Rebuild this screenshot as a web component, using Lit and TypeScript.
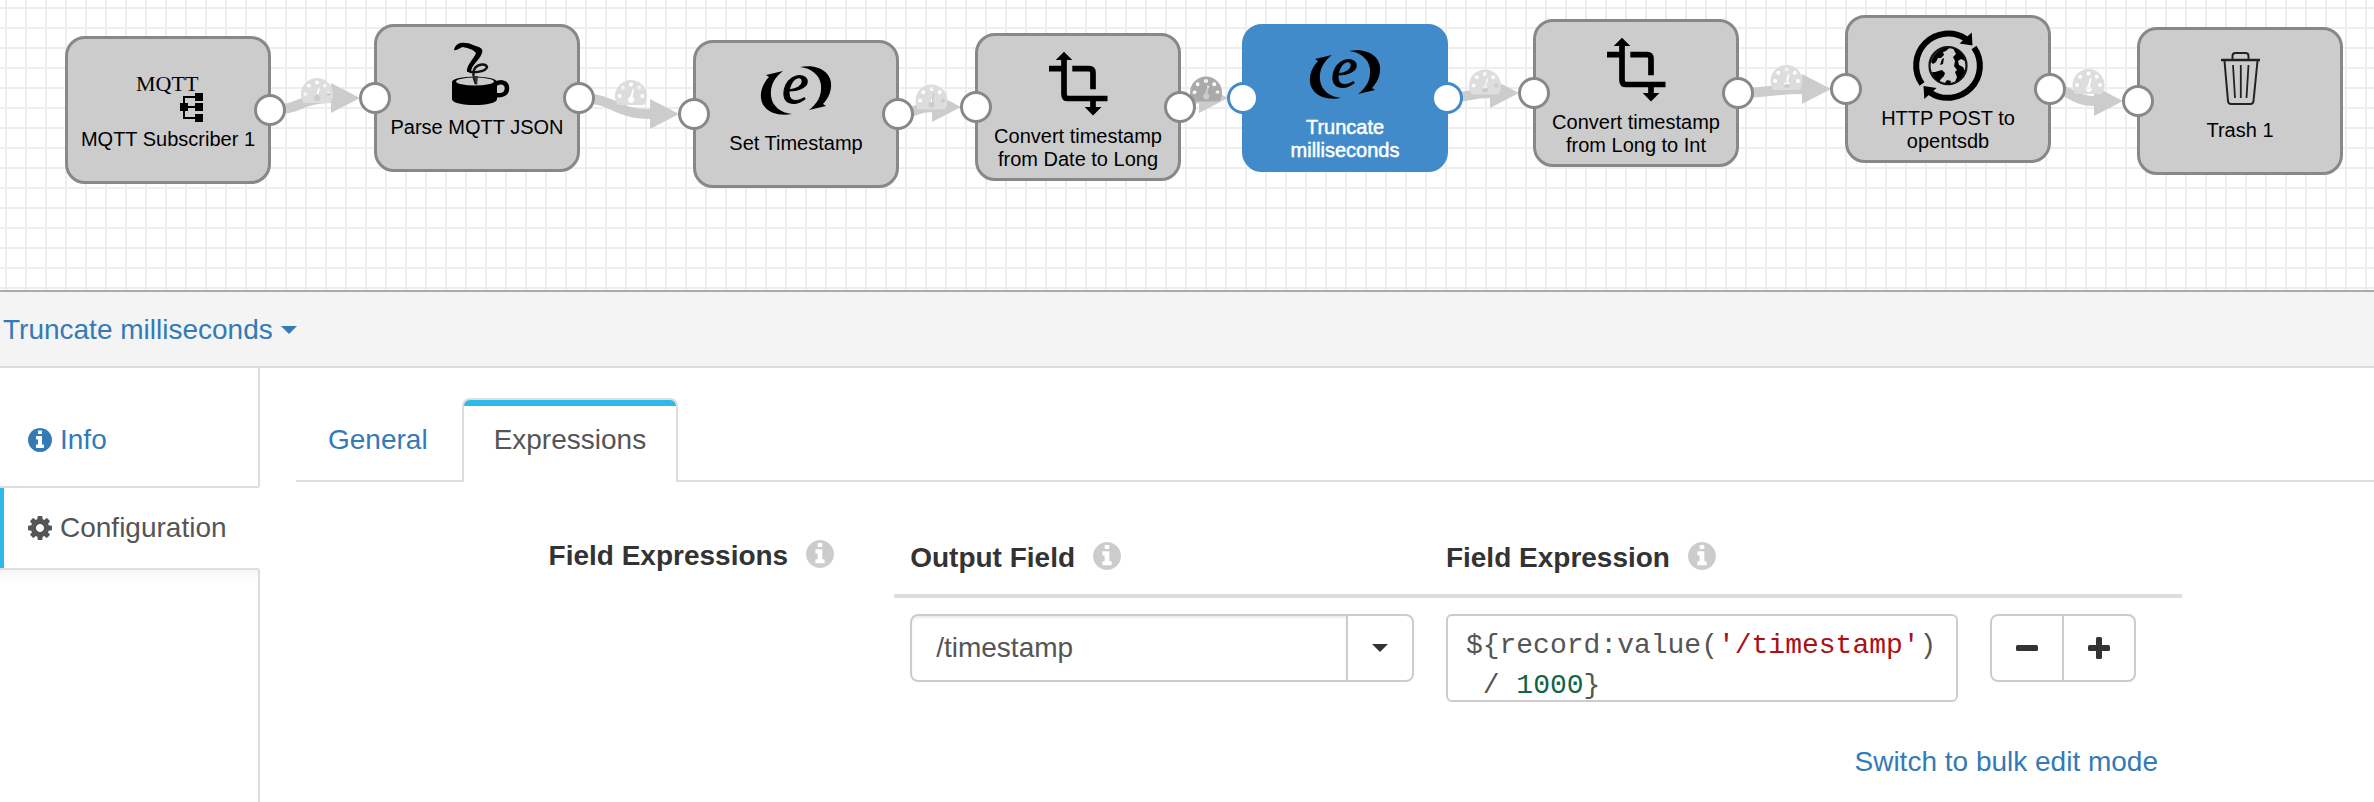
import { LitElement, html, svg, css } from "lit";
import { customElement, property, state } from "lit/decorators.js";
import { classMap } from "lit/directives/class-map.js";
import { styleMap } from "lit/directives/style-map.js";

interface Stage {
  id: string;
  lines: string[];
  icon: string;
  x: number;
  y: number;
  input: boolean;
  output: boolean;
}

const NODE_W = 206;
const NODE_H = 148;

const STAGES: Stage[] = [
  { id: "mqtt", lines: ["MQTT Subscriber 1"], icon: "mqtt", x: 65, y: 36, input: false, output: true },
  { id: "json", lines: ["Parse MQTT JSON"], icon: "cup", x: 374, y: 24, input: true, output: true },
  { id: "set", lines: ["Set Timestamp"], icon: "expr", x: 693, y: 40, input: true, output: true },
  { id: "date", lines: ["Convert timestamp", "from Date to Long"], icon: "convert", x: 975, y: 33, input: true, output: true },
  { id: "trunc", lines: ["Truncate", "milliseconds"], icon: "expr", x: 1242, y: 24, input: true, output: true },
  { id: "int", lines: ["Convert timestamp", "from Long to Int"], icon: "convert", x: 1533, y: 19, input: true, output: true },
  { id: "http", lines: ["HTTP POST to", "opentsdb"], icon: "http", x: 1845, y: 15, input: true, output: true },
  { id: "trash", lines: ["Trash 1"], icon: "trash", x: 2137, y: 27, input: true, output: false },
];

const expressionParen =
  "M27 23L10 27L13 29C5 37 2 50 8 58C14 66 25 68 36 66C25 65 16 58 15 48C14 37 19 29 27 23Z";

const stageIcons: Record<string, unknown> = {
  mqtt: svg`
    <text x="8" y="47" font-family="Liberation Serif, serif" font-size="22">MQTT</text>
    <path d="M71 53H56V74H71M56 63H71" fill="none" stroke="#000" stroke-width="2"/>
    <path d="M52 59h8v8h-8zM67 49h8v8h-8zM67 59h8v8h-8zM67 70h8v8h-8z"/>`,
  cup: svg`
    <path d="M15 50C15 43 60 43 60 50V67C60 75 15 75 15 67Z"/>
    <ellipse cx="38" cy="49.500" rx="19" ry="4" fill="#ccc"/>
    <path d="M59 52C63 49 70 50 70 56C70 62 65 64 59 63" fill="none" stroke="#000" stroke-width="4.500"/>
    <path d="M31 38C33 42 49 40 50 35C49 31 41 32 38 36C35 40 36 45 39 52" fill="none" stroke="#111" stroke-width="2.500"/>
    <path d="M17 18C19 9 29 10 36 13C42 15 47 16 45 21C43 28 34 33 34 40L30 40C29 33 37 27 39 21C36 17 30 16 26 15C22 16 20 19 17 18Z"/>
    <path d="M36 44L41 44L40 54Z" fill="#333"/>`,
  expr: svg`
    <path d=${expressionParen}/>
    <path d=${expressionParen} transform="rotate(180 40 42.500)"/>
    <text x="26" y="55" font-family="Liberation Serif, serif" font-style="italic" font-size="60" stroke="#000" stroke-width="1">e</text>`,
  convert: svg`
    <path d="M26 18V53Q26 57.500 30 57.500H69.500M11 27.700H24M34.300 27.700H51Q55 27.700 55 32V48.300M55 58V67" fill="none" stroke="#000" stroke-width="5.700"/>
    <path d="M26 10.700L34.300 19H17.700ZM46.700 66H63.500L55 74.500Z"/>`,
  http: svg`
    <g>
      <path d="M14 61A32 32 0 0 1 58 16" fill="none" stroke="#000" stroke-width="6"/>
      <path d="M63.700 9.500L64.500 22.500L51.500 20.500Z"/>
    </g>
    <g transform="rotate(180 40 42.700)">
      <path d="M14 61A32 32 0 0 1 58 16" fill="none" stroke="#000" stroke-width="6"/>
      <path d="M63.700 9.500L64.500 22.500L51.500 20.500Z"/>
    </g>
    <circle cx="40" cy="42.700" r="18.500" fill="none" stroke="#111" stroke-width="2.200"/>
    <path d="M23 39C25 32 30 27 36 25L41 25L38 28L35 29L36 32L33 35L30 35L28 39L25 41ZM27 49L34 47L37 50L36 53L33 56L31 59C27 56 25 53 24 49ZM45 25C51 27 56 32 57 38L53 36L50 38L51 42L55 44L57 48C55 53 52 57 47 59L49 54L47 49L49 47L46 43L47 38L45 34L48 31ZM34 36L36 35L35 41L32 42ZM39 57L43 58L42 61L37 60Z"/>`,
  trash: svg`
    <g fill="none" stroke="#222">
      <path d="M21 25H60" stroke-width="2.500"/>
      <path d="M32.500 25V21Q32.500 18 35.500 18H45.500Q48.500 18 48.500 21V25" stroke-width="2"/>
      <path d="M24.500 26L28 66Q28.300 69 31 69H50.500Q53.200 69 53.500 66L57.500 26" stroke-width="2"/>
      <path d="M33 30L35 63M40.800 30V63M48.500 30L46.500 63" stroke-width="1.800"/>
    </g>`,
};

const gaugePath =
  "M16 0A16 16 0 0 1 32 16C32 19.500 31 22.500 29.300 25H2.700C1 22.500 0 19.500 0 16A16 16 0 0 1 16 0Z" +
  "M16 2.500A2 2 0 1 0 16 6.500A2 2 0 1 0 16 2.500Z" +
  "M7.800 5.800A2 2 0 1 0 7.800 9.800A2 2 0 1 0 7.800 5.800Z" +
  "M24.200 5.800A2 2 0 1 0 24.200 9.800A2 2 0 1 0 24.200 5.800Z" +
  "M4.600 14A2 2 0 1 0 4.600 18A2 2 0 1 0 4.600 14Z" +
  "M27.400 14A2 2 0 1 0 27.400 18A2 2 0 1 0 27.400 14Z" +
  "M17.500 9L19 9.400L17.500 17A3.200 3.200 0 1 1 15.400 16.800Z";

const infoPath =
  "M1024 1248v-160q0-14-9-23t-23-9h-96V544q0-14-9-23t-23-9H544q-14 0-23 9t-9 23v160q0 14 9 23t23 9h96v320h-96q-14 0-23 9t-9 23v160q0 14 9 23t23 9h448q14 0 23-9t9-23zM896 352V192q0-14-9-23t-23-9H672q-14 0-23 9t-9 23v160q0 14 9 23t23 9h192q14 0 23-9t9-23zm640 416q0 209-103 385.500T1153.500 1433 768 1536t-385.500-103T103 1153.500 0 768t103-385.500T382.500 103 768 0t385.500 103T1433 382.500 1536 768z";

const cogPath =
  "M1024 768q0 106-75 181t-181 75-181-75-75-181 75-181 181-75 181 75 75 181zm512-109v222q0 12-8 23t-20 13l-185 28q-19 54-39 91 35 50 107 138 10 12 10 25t-9 23q-27 37-99 108t-94 71q-12 0-26-9l-138-108q-44 23-91 38-16 136-29 186-7 28-36 28H657q-14 0-24.500-8.500T621 1506l-28-184q-49-16-90-37l-141 107q-10 9-25 9-14 0-25-11-126-114-165-168-7-10-7-23 0-12 8-23 15-21 51-66.500t54-70.500q-27-50-41-99L29 913q-13-2-21-12.500T0 877V655q0-12 8-23t19-13l186-28q14-46 39-92-40-57-107-138-10-12-10-24 0-10 9-23 26-36 98.500-107.500T337 135q13 0 26 10l138 107q44-23 91-38 16-136 29-186 7-28 36-28h222q14 0 24.500 8.500T915 30l28 184q49 16 90 37l142-107q9-9 24-9 13 0 25 10 129 119 165 170 7 8 7 22 0 12-8 23-15 21-51 66.500t-54 70.500q26 50 41 98l183 28q13 2 21 12.500t8 23.500z";

/* ---------- Pipeline canvas ---------- */

@customElement("pipeline-canvas")
class PipelineCanvas extends LitElement {
  @property() selected = "trunc";

  static styles = css`
    :host {
      display: block;
      position: relative;
      height: 290px;
      overflow: hidden;
      background-color: #fff;
      background-image: linear-gradient(to right, #eee 2px, transparent 2px),
        linear-gradient(to bottom, #eee 2px, transparent 2px);
      background-size: 20px 20px;
      background-position: 5px 7px;
      font-family: "Liberation Sans", Arial, sans-serif;
    }
    .wires {
      position: absolute;
      left: 0;
      top: 0;
      width: 100%;
      height: 100%;
      overflow: visible;
    }
    .node {
      position: absolute;
      box-sizing: border-box;
      width: 206px;
      height: 148px;
      padding: 5px 0 0;
      border: 3px solid #888;
      border-radius: 20px;
      background: #ccc;
      color: #000;
      font: inherit;
      display: flex;
      flex-direction: column;
      align-items: center;
    }
    .node.selected {
      background: #428bca;
      border-color: #428bca;
      color: #fff;
    }
    .node-icon {
      width: 80px;
      height: 80px;
      flex: none;
    }
    .label {
      margin-top: 4px;
      font-size: 20px;
      line-height: 23px;
      text-align: center;
      white-space: nowrap;
    }
    .selected .label {
      -webkit-text-stroke: 0.5px #fff;
    }
    .line {
      display: block;
    }
    .port {
      position: absolute;
      box-sizing: border-box;
      top: 55px;
      width: 32px;
      height: 32px;
      border: 3px solid #888;
      border-radius: 50%;
      background: #fff;
    }
    .selected .port {
      border-color: #428bca;
    }
    .port.in {
      left: -18px;
    }
    .port.out {
      right: -18px;
    }
  `;

  private wire(from: Stage, to: Stage, i: number) {
    const x1 = from.x + NODE_W - 1;
    const y1 = from.y + NODE_H / 2;
    const x2 = to.x - 43;
    const y2 = to.y + NODE_H / 2;
    const bend = (x2 - x1) / 2;
    const gx = (x1 + to.x) / 2 - 21;
    const gy = (y1 + y2) / 2 - 26;
    return svg`
      <path d="M${x1} ${y1}C${x1 + bend} ${y1} ${x2 - bend} ${y2} ${x2} ${y2}" fill="none" stroke="#ccc" stroke-width="10"/>
      <path d="M${x2} ${y2 - 15}L${x2 + 29} ${y2}L${x2} ${y2 + 15}Z" fill="#ccc"/>
      <path d=${gaugePath} transform="translate(${gx} ${gy})" fill=${i === 3 ? "#aaa" : "#ddd"} fill-rule="evenodd"/>`;
  }

  render() {
    return html`
      <svg class="wires" aria-hidden="true">
        ${STAGES.slice(1).map((s, i) => this.wire(STAGES[i], s, i))}
      </svg>
      ${STAGES.map(
        (s) => html`
          <button
            class=${classMap({ node: true, selected: s.id === this.selected })}
            style=${styleMap({ left: `${s.x}px`, top: `${s.y}px` })}
            @click=${() => (this.selected = s.id)}
          >
            <svg class="node-icon" viewBox="0 0 80 80" aria-hidden="true">${stageIcons[s.icon]}</svg>
            <span class="label">${s.lines.map((l) => html`<span class="line">${l}</span>`)}</span>
            ${s.input ? html`<span class="port in"></span>` : ""}
            ${s.output ? html`<span class="port out"></span>` : ""}
          </button>
        `
      )}
    `;
  }
}

/* ---------- Application ---------- */

@customElement("app-root")
class AppRoot extends LitElement {
  @state() private field = "/timestamp";

  static styles = css`
    :host {
      display: flex;
      flex-direction: column;
      min-height: 100vh;
      background: #fff;
      color: #333;
      font-family: "Liberation Sans", Arial, sans-serif;
      font-size: 28px;
      line-height: 40px;
    }
    a {
      color: #337ab7;
      text-decoration: none;
    }
    button {
      font: inherit;
      cursor: pointer;
    }
    .titlebar {
      border-top: 2px solid #aaa;
      border-bottom: 2px solid #ddd;
      background: #f4f4f4;
      padding: 18px 3px 16px;
      display: flex;
    }
    .title {
      display: flex;
      align-items: center;
      gap: 8px;
      padding: 0;
      border: 0;
      background: none;
      color: #337ab7;
    }
    .caret {
      width: 16px;
      height: 8px;
      fill: currentColor;
    }
    .body {
      flex: 1;
      display: flex;
    }
    .side {
      width: 260px;
      flex: none;
      display: flex;
      flex-direction: column;
    }
    .side-link {
      box-sizing: border-box;
      display: flex;
      align-items: center;
      gap: 8px;
      padding: 20px 28px;
    }
    .side-link.first {
      padding: 52px 28px 26px;
      border-right: 2px solid #ddd;
      border-bottom: 2px solid #ddd;
      border-bottom-right-radius: 3px;
    }
    .side-link.active {
      color: #555;
      padding-left: 24px;
      border-left: 4px solid #2fb8ea;
    }
    .side-rest {
      flex: 1;
      border-top: 2px solid #ddd;
      border-right: 2px solid #ddd;
      border-top-right-radius: 3px;
      background: linear-gradient(#f6f6f6, #fff 12px);
    }
    .side-icon {
      width: 24px;
      height: 24px;
      fill: currentColor;
      fill-rule: evenodd;
    }
    .main {
      flex: 1;
      min-width: 0;
      padding: 30px 0 0 36px;
    }
    .tabs {
      display: flex;
      gap: 2px;
      border-bottom: 2px solid #ddd;
    }
    .tab {
      padding: 22px 32px 20px;
    }
    .tab.active {
      margin-bottom: -2px;
      padding: 20px 30px 22px;
      border: 2px solid #ddd;
      border-bottom: 0;
      border-radius: 8px 8px 0 0;
      background: linear-gradient(#2fb8ea 6px, #fff 6px);
      color: #555;
    }
    .tab-text {
      display: block;
    }
    .form {
      display: grid;
      grid-template-columns: 28fr 67fr;
      column-gap: 60px;
      padding: 40px 192px 0 0;
    }
    .form-label {
      display: flex;
      justify-content: flex-end;
      align-items: flex-start;
      padding-top: 14px;
    }
    .heading {
      display: flex;
      align-items: center;
      gap: 18px;
      font-weight: bold;
      white-space: nowrap;
    }
    .hint {
      width: 28px;
      height: 28px;
      margin-bottom: 4px;
      fill: #ccc;
    }
    .grid {
      width: 100%;
      table-layout: fixed;
      border-collapse: collapse;
    }
    .col-field {
      width: 41.6%;
    }
    .col-actions {
      width: 208px;
    }
    .grid th {
      padding: 16px;
      border-bottom: 4px solid #ddd;
      text-align: left;
    }
    .grid td {
      padding: 16px;
      vertical-align: top;
    }
    .combo {
      display: flex;
      height: 68px;
    }
    .input {
      flex: 1;
      min-width: 0;
      box-sizing: border-box;
      margin: 0;
      padding: 0 24px;
      border: 2px solid #ccc;
      border-radius: 8px 0 0 8px;
      box-shadow: inset 0 2px 2px rgba(0, 0, 0, 0.075);
      background: #fff;
      color: #555;
      font: inherit;
    }
    .drop {
      box-sizing: border-box;
      width: 66px;
      padding: 0;
      border: 2px solid #ccc;
      border-left: 0;
      border-radius: 0 8px 8px 0;
      background: #fff;
      color: #333;
      display: flex;
      align-items: center;
      justify-content: center;
    }
    .code {
      box-sizing: border-box;
      height: 88px;
      padding: 10px 18px;
      border: 2px solid #ccc;
      border-radius: 6px;
      overflow: hidden;
      color: #555;
      font-family: "Liberation Mono", "Courier New", monospace;
      white-space: pre;
    }
    .code-line {
      display: block;
    }
    .string {
      color: #a11;
    }
    .number {
      color: #164;
    }
    .group {
      display: inline-flex;
      height: 68px;
      box-sizing: border-box;
      border: 2px solid #ccc;
      border-radius: 8px;
      vertical-align: top;
    }
    .step {
      width: 70px;
      padding: 0;
      border: 0;
      background: none;
      color: #333;
      display: flex;
      align-items: center;
      justify-content: center;
    }
    .step + .step {
      box-sizing: content-box;
      border-left: 2px solid #ccc;
    }
    .step-icon {
      width: 22px;
      height: 22px;
      fill: currentColor;
    }
    .bulk {
      margin-top: 24px;
      padding-right: 24px;
      text-align: right;
    }
  `;

  private hint() {
    return html`<svg class="hint" viewBox="0 0 1536 1536" aria-hidden="true"><path d=${infoPath} /></svg>`;
  }

  private caret() {
    return html`<svg class="caret" viewBox="0 0 16 8" aria-hidden="true"><path d="M0 0H16L8 8Z" /></svg>`;
  }

  render() {
    return html`
      <pipeline-canvas></pipeline-canvas>
      <header class="titlebar">
        <button class="title" aria-haspopup="true">Truncate milliseconds ${this.caret()}</button>
      </header>
      <div class="body">
        <nav class="side">
          <a class="side-link first" href="#info">
            <svg class="side-icon" viewBox="0 0 1536 1536" aria-hidden="true"><path d=${infoPath} /></svg>
            <span>Info</span>
          </a>
          <a class="side-link active" href="#configuration" aria-current="page">
            <svg class="side-icon" viewBox="0 0 1536 1536" aria-hidden="true"><path d=${cogPath} /></svg>
            <span>Configuration</span>
          </a>
          <div class="side-rest"></div>
        </nav>
        <main class="main">
          <nav class="tabs">
            <a class="tab" href="#general"><span class="tab-text">General</span></a>
            <a class="tab active" href="#expressions" aria-current="page"><span class="tab-text">Expressions</span></a>
          </nav>
          <form class="form" @submit=${(e: Event) => e.preventDefault()}>
            <div class="form-label"><span class="heading" id="expr-label">Field Expressions ${this.hint()}</span></div>
            <div>
              <table class="grid" aria-labelledby="expr-label">
                <colgroup>
                  <col class="col-field" />
                  <col />
                  <col class="col-actions" />
                </colgroup>
                <thead>
                  <tr>
                    <th><label class="heading" for="output">Output Field ${this.hint()}</label></th>
                    <th><span class="heading" id="code-label">Field Expression ${this.hint()}</span></th>
                    <th></th>
                  </tr>
                </thead>
                <tbody>
                  <tr>
                    <td>
                      <div class="combo">
                        <input
                          class="input"
                          id="output"
                          type="text"
                          .value=${this.field}
                          @input=${(e: Event) => (this.field = (e.target as HTMLInputElement).value)}
                        />
                        <button class="drop" type="button" aria-label="Choose field">${this.caret()}</button>
                      </div>
                    </td>
                    <td>
                      <div class="code" role="textbox" aria-multiline="true" aria-labelledby="code-label" contenteditable="true" spellcheck="false"><span class="code-line">\${record:value(<span class="string">'/timestamp'</span>)</span><span class="code-line"> / <span class="number">1000</span>}</span></div>
                    </td>
                    <td>
                      <div class="group">
                        <button class="step" type="button" aria-label="Remove">
                          <svg class="step-icon" viewBox="0 0 22 22"><rect y="8" width="22" height="6" rx="1.500" /></svg>
                        </button>
                        <button class="step" type="button" aria-label="Add">
                          <svg class="step-icon" viewBox="0 0 22 22">
                            <rect y="8" width="22" height="6" rx="1.500" /><rect x="8" width="6" height="22" rx="1.500" />
                          </svg>
                        </button>
                      </div>
                    </td>
                  </tr>
                </tbody>
              </table>
              <div class="bulk"><a href="#bulk">Switch to bulk edit mode</a></div>
            </div>
          </form>
        </main>
      </div>
    `;
  }
}
